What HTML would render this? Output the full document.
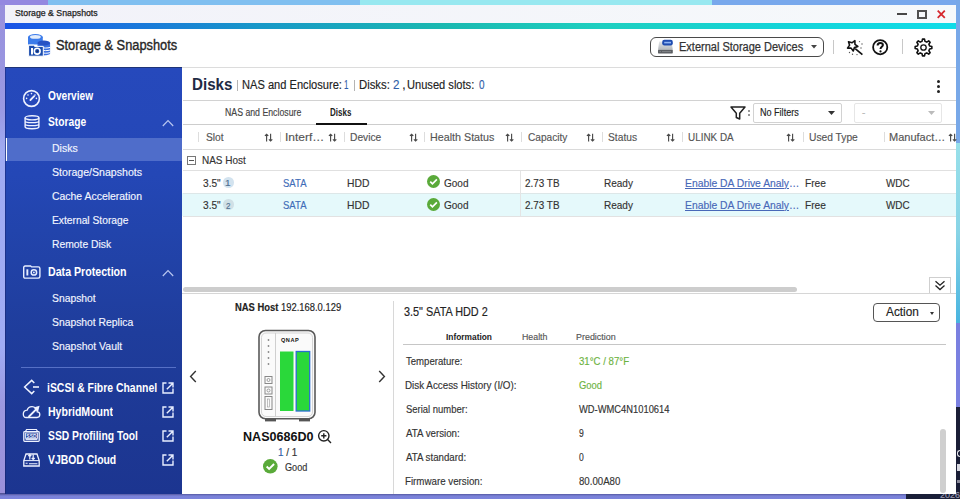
<!DOCTYPE html>
<html><head><meta charset="utf-8">
<style>
*{margin:0;padding:0;box-sizing:border-box}
html,body{width:960px;height:499px;overflow:hidden}
body{font-family:"Liberation Sans",sans-serif;position:relative;background:#8a82dc}
.b{position:absolute}
.t{position:absolute;white-space:nowrap;line-height:1;transform-origin:0 0;-webkit-text-stroke:0.15px currentColor}
svg{position:absolute;overflow:visible}
</style></head><body>
<!-- desktop -->
<div class="b" style="left:0;top:0;width:48px;height:5px;background:#9488e0"></div>
<div class="b" style="left:48px;top:0;width:312px;height:5px;background:#80bff0"></div>
<div class="b" style="left:360px;top:0;width:352px;height:5px;background:#98e8f0"></div>
<div class="b" style="left:712px;top:0;width:248px;height:5px;background:#78a8ec"></div>
<div class="b" style="left:956px;top:0;width:4px;height:143px;background:#78a8e8"></div>
<div class="b" style="left:956px;top:143px;width:4px;height:180px;background:linear-gradient(180deg,#98e0ea 0%,#88d4e6 50%,#48b4e0 100%)"></div>
<div class="b" style="left:956px;top:323px;width:4px;height:84px;background:#7a80e0"></div>
<div class="b" style="left:956px;top:407px;width:4px;height:92px;background:#1a1e36"></div>
<div class="b" style="left:0;top:493px;width:906px;height:6px;background:linear-gradient(180deg,#4c4c8c 0,#5f64b0 1.5px,#7a82d8 3px,#7c84dc 6px)"></div>
<div class="b" style="left:906px;top:493px;width:54px;height:6px;background:#1a1f38"></div>

<div class="b" style="left:957px;top:450px;width:3px;height:7px;border:1.2px solid #e8e8ee;border-right:none;border-radius:3px 0 0 3px"></div>
<div class="b" style="left:957px;top:464px;width:3px;height:7px;background:#d8d8e0"></div>
<div class="b" style="left:957px;top:480px;width:3px;height:3px;background:#8a8a9a"></div>
<div class="t" style="left:940px;top:491px;font-size:9px;color:#9a9ab0">2026</div>
<div class="b" style="left:0;top:5px;width:5px;height:488px;background:linear-gradient(180deg,#9890dc 0%,#9a9ae4 22%,#a0abf2 30%,#a0acf4 70%,#9c98e0 82%,#9a90da 100%)"></div>
<!-- window -->
<div class="b" style="left:5px;top:5px;width:951px;height:488.5px;background:#fff"></div>
<div class="b" style="left:5px;top:5px;width:951px;height:17.5px;background:linear-gradient(90deg,#f2f2f9,#f6f9fb)"></div>
<div class="b" style="left:5px;top:22.5px;width:951px;height:6px;background:linear-gradient(90deg,#1a52e6 0px,#1a6ee0 95px,#1898c8 255px,#1ab8b0 435px,#1ecfc0 595px,#14d4d8 775px,#10dce8 951px)"></div>
<!-- window controls -->
<div class="b" style="left:897px;top:13px;width:10px;height:2px;background:#474747"></div>
<div class="b" style="left:917px;top:10px;width:10px;height:8.5px;border:2px solid #505050"></div>
<svg style="left:937px;top:10px" width="8.5" height="8.5" viewBox="0 0 8.5 8.5"><path d="M0.7 0.7L7.8 7.8M7.8 0.7L0.7 7.8" stroke="#d6282e" stroke-width="1.8"/></svg>

<!-- header -->
<div class="b" style="left:5px;top:67px;width:951px;height:1px;background:#dcdcdc"></div>
<svg style="left:24px;top:31px" width="30" height="28" viewBox="0 0 30 28">
  <path d="M4 6V13.5H18.8V6Z" fill="#3c7cea"/>
  <ellipse cx="11.4" cy="6" rx="7.4" ry="2.9" fill="#3c7cea"/>
  <ellipse cx="11.4" cy="5.9" rx="5.4" ry="1.9" fill="#e4edfb"/>
  <path d="M13.5 12V22.6C13.5 25 26.1 25 26.1 22.6V12Z" fill="#3a6fe0"/>
  <ellipse cx="19.8" cy="12" rx="6.3" ry="2.6" fill="#2752c4"/>
  <path d="M17 16.4C20 17.3 23.5 17.2 26.1 16.4M17 19C20 19.9 23.5 19.8 26.1 19M17 21.6C20 22.5 23.5 22.4 26.1 21.6" fill="none" stroke="#fff" stroke-width="1"/>
  <path d="M4.6 14.2H9.5L10.8 15.4H19.3V25.2H4.6Z" fill="#1b4cac" stroke="#fff" stroke-width="1"/>
  <rect x="7" y="17" width="2" height="6.5" fill="#fff"/>
  <circle cx="13.2" cy="20.2" r="2.9" fill="none" stroke="#fff" stroke-width="1.6"/>
  <circle cx="13.2" cy="20.2" r="0.9" fill="#1b2a60"/>
</svg>
<div class="b" style="left:650px;top:36.5px;width:173.5px;height:20.5px;border:1.3px solid #4a4a4a;border-radius:6px"></div>
<svg style="left:657px;top:39px" width="17" height="15" viewBox="0 0 17 15">
  <defs><linearGradient id="dg" x1="0" y1="0" x2="0" y2="1"><stop offset="0" stop-color="#e4e6e9"/><stop offset="1" stop-color="#b4b8bd"/></linearGradient></defs>
  <path d="M2.2 2.5H14.6L15.8 10.8H1Z" fill="url(#dg)"/>
  <rect x="1" y="10.8" width="14.8" height="3.6" rx=".6" fill="#5c5f63"/>
  <path d="M2.5 12.6H4M5 12.6H14" stroke="#8a8d91" stroke-width=".8"/>
  <rect x="5.2" y="0.8" width="10.6" height="5.6" rx="2.2" fill="#1f4cb0"/>
  <path d="M7.2 3.6H14" stroke="#8fb4f4" stroke-width="1.6"/>
</svg>
<svg style="left:811px;top:45px" width="6" height="3.5" viewBox="0 0 6 3.5"><path d="M0 0H6L3 3.5Z" fill="#444"/></svg>
<div class="b" style="left:832.5px;top:40px;width:1px;height:14px;background:#c8c8c8"></div>
<div class="b" style="left:901.5px;top:39px;width:1px;height:15px;background:#c8c8c8"></div>
<svg style="left:846px;top:39px" width="18" height="17" viewBox="0 0 18 17">
  <path d="M8.90 1.70 L8.94 5.31 L11.83 7.46 L8.42 8.62 L7.26 12.03 L5.11 9.14 L1.50 9.10 L3.59 6.15 L2.51 2.71 L5.95 3.79Z" fill="none" stroke="#111" stroke-width="1.6" stroke-linejoin="round"/>
  <path d="M9.2 9.6L16.4 15.6" stroke="#111" stroke-width="1.7"/>
  <circle cx="13.5" cy="2.6" r=".7" fill="#555"/><circle cx="16" cy="5" r=".7" fill="#555"/>
  <circle cx="15" cy="9" r=".7" fill="#555"/><circle cx="3.5" cy="13.5" r=".7" fill="#555"/>
  <circle cx="6.5" cy="15.3" r=".7" fill="#555"/><circle cx="11" cy="15.6" r=".7" fill="#555"/>
</svg>
<svg style="left:872px;top:39px" width="17" height="17" viewBox="0 0 17 17">
  <circle cx="8.2" cy="8.2" r="7.1" fill="none" stroke="#111" stroke-width="1.8"/>
  <path d="M5.6 6.4C5.6 4.8 6.8 3.9 8.3 3.9C9.8 3.9 10.9 4.8 10.9 6.1C10.9 7.8 8.5 7.9 8.5 10" fill="none" stroke="#111" stroke-width="2"/>
  <circle cx="8.5" cy="12.4" r="1.1" fill="#111"/>
</svg>
<svg style="left:913.3px;top:36.8px" width="21" height="21" viewBox="-10.5 -10.5 21 21">
  <path d="M-1.50 -6.12 L-1.01 -8.34 L1.01 -8.34 L1.50 -6.12 L3.27 -5.39 L5.19 -6.61 L6.61 -5.19 L5.39 -3.27 L6.12 -1.50 L8.34 -1.01 L8.34 1.01 L6.12 1.50 L5.39 3.27 L6.61 5.19 L5.19 6.61 L3.27 5.39 L1.50 6.12 L1.01 8.34 L-1.01 8.34 L-1.50 6.12 L-3.27 5.39 L-5.19 6.61 L-6.61 5.19 L-5.39 3.27 L-6.12 1.50 L-8.34 1.01 L-8.34 -1.01 L-6.12 -1.50 L-5.39 -3.27 L-6.61 -5.19 L-5.19 -6.61 L-3.27 -5.39Z" fill="none" stroke="#111" stroke-width="1.6" stroke-linejoin="round"/>
  <circle cx="0" cy="0" r="2.7" fill="none" stroke="#111" stroke-width="1.3"/>
</svg>

<!-- sidebar -->
<div class="b" style="left:5px;top:67px;width:177px;height:426.5px;background:linear-gradient(180deg,#2649bc 0%,#2447b6 25%,#2244ac 38%,#1f3d9c 62%,#1d3894 85%,#1c3590 100%);border-top:1px solid #1e3478"></div>
<div class="b" style="left:5px;top:137.5px;width:177px;height:23px;background:#4f6dca"></div>
<div class="b" style="left:5px;top:68px;width:1px;height:425.5px;background:rgba(20,20,80,.35)"></div>
<div class="b" style="left:5.5px;top:137.5px;width:1.6px;height:23px;background:#fff"></div>
<div class="b" style="left:21px;top:366.5px;width:155px;height:1px;background:#5670c6"></div>
<!-- sidebar icons -->
<svg style="left:22px;top:88.5px" width="19" height="19" viewBox="0 0 19 19">
  <circle cx="9.5" cy="9.5" r="7.9" fill="none" stroke="#eef2ff" stroke-width="1.6"/>
  <path d="M8.4 11L12.2 7.2" stroke="#eef2ff" stroke-width="1.8" stroke-linecap="round"/>
  <circle cx="9.5" cy="4.6" r=".8" fill="#eef2ff"/><circle cx="6" cy="6" r=".8" fill="#eef2ff"/>
  <circle cx="13" cy="6" r=".8" fill="#eef2ff"/><circle cx="4.6" cy="9.4" r=".8" fill="#eef2ff"/><circle cx="14.4" cy="9.4" r=".8" fill="#eef2ff"/>
</svg>
<svg style="left:23.5px;top:114.5px" width="16" height="15" viewBox="0 0 16 15">
  <ellipse cx="8" cy="2.8" rx="6.9" ry="2.1" fill="none" stroke="#eef2ff" stroke-width="1.4"/>
  <path d="M1.1 2.8V11.8C1.1 14.3 14.9 14.3 14.9 11.8V2.8M1.1 5.9C1.1 8.2 14.9 8.2 14.9 5.9M1.1 8.9C1.1 11.2 14.9 11.2 14.9 8.9" fill="none" stroke="#eef2ff" stroke-width="1.4"/>
</svg>
<svg style="left:162px;top:118.5px" width="12" height="8" viewBox="0 0 12 8"><path d="M0.8 7L6 1.5L11.2 7" fill="none" stroke="#b8c6f0" stroke-width="1.2"/></svg>
<svg style="left:22.5px;top:265px" width="18" height="14" viewBox="0 0 18 14">
  <path d="M2.2 1H7.6L8.6 1.9H15.3C16.4 1.9 16.9 2.5 16.9 3.5V11.6C16.9 12.6 16.4 13.1 15.3 13.1H2.2C1.2 13.1 0.7 12.6 0.7 11.6V2.5C0.7 1.5 1.2 1 2.2 1Z" fill="none" stroke="#e8eeff" stroke-width="1.4"/>
  <rect x="3.4" y="4.3" width="1.9" height="6.2" fill="#e8eeff"/>
  <circle cx="10.9" cy="7.4" r="2.7" fill="none" stroke="#e8eeff" stroke-width="1.5"/>
  <circle cx="10.9" cy="7.4" r="0.9" fill="#e8eeff"/>
</svg>
<svg style="left:162px;top:268.5px" width="12" height="8" viewBox="0 0 12 8"><path d="M0.8 7L6 1.5L11.2 7" fill="none" stroke="#b8c6f0" stroke-width="1.2"/></svg>
<!-- iSCSI icon -->
<svg style="left:23px;top:379px" width="17" height="16" viewBox="0 0 17 16">
  <path d="M11.3 4L8.7 1.4L1.6 8L8.7 14.6L11.3 12" fill="none" stroke="#eef2ff" stroke-width="1.5"/>
  <path d="M10 8H16" stroke="#eef2ff" stroke-width="1.6"/>
</svg>
<!-- HybridMount icon -->
<svg style="left:22px;top:404px" width="19" height="15" viewBox="0 0 19 15">
  <path d="M4.2 13.5H15C16.8 13.5 17.8 12.2 17.8 10.6C17.8 9 16.6 7.8 15.2 7.8C15 5 13 2.6 10 2.6C7.6 2.6 5.8 4 5.2 6.2C3 6.4 1.3 8 1.3 10C1.3 12 2.6 13.5 4.2 13.5Z" fill="none" stroke="#eef2ff" stroke-width="1.3"/>
  <path d="M6.5 13L15.5 4" stroke="#eef2ff" stroke-width="1.8"/>
  <path d="M17.6 1.8L11.4 3.4L16 8Z" fill="#eef2ff"/>
</svg>
<!-- SSD icon -->
<svg style="left:23px;top:428px" width="17" height="15" viewBox="0 0 17 15">
  <path d="M2.4 3.6L3.6 1.5H13.4L14.6 3.6" fill="none" stroke="#eef2ff" stroke-width="1.2"/>
  <rect x="0.8" y="3.6" width="15.4" height="9.8" rx="0.8" fill="none" stroke="#eef2ff" stroke-width="1.3"/>
  <rect x="2.6" y="5" width="11.8" height="5.4" fill="none" stroke="#eef2ff" stroke-width="0.9"/>
  <text x="8.5" y="9.6" font-size="5" font-family="Liberation Sans" font-weight="bold" fill="#eef2ff" text-anchor="middle">SSD</text>
  <path d="M2.6 11.6H14.4" stroke="#eef2ff" stroke-width="1"/>
</svg>
<!-- VJBOD icon -->
<svg style="left:23px;top:452px" width="17" height="15" viewBox="0 0 17 15">
  <path d="M0.8 8.6L3 2H14L16.2 8.6V14H0.8Z" fill="none" stroke="#eef2ff" stroke-width="1.3"/>
  <path d="M0.8 8.6H16.2" stroke="#eef2ff" stroke-width="1"/>
  <path d="M6.8 7.5V2.5M5.3 4L6.8 2.5L8.3 4M10.2 2.5V7.5M8.7 6L10.2 7.5L11.7 6" fill="none" stroke="#eef2ff" stroke-width="1.2"/>
  <path d="M2.6 11.3H4.6M6 11.8H14.4" stroke="#eef2ff" stroke-width="1.1"/>
</svg>
<!-- external link icons -->
<svg style="left:161.7px;top:381.8px" width="12" height="12" viewBox="0 0 12 12"><path d="M4.5 1H1V11H11V6.5M6.5 1H11V5.5M10.6 1.4L4.8 7.2" fill="none" stroke="#e8eeff" stroke-width="1.4"/></svg>
<svg style="left:161.7px;top:406px" width="12" height="12" viewBox="0 0 12 12"><path d="M4.5 1H1V11H11V6.5M6.5 1H11V5.5M10.6 1.4L4.8 7.2" fill="none" stroke="#e8eeff" stroke-width="1.4"/></svg>
<svg style="left:161.7px;top:430.2px" width="12" height="12" viewBox="0 0 12 12"><path d="M4.5 1H1V11H11V6.5M6.5 1H11V5.5M10.6 1.4L4.8 7.2" fill="none" stroke="#e8eeff" stroke-width="1.4"/></svg>
<svg style="left:161.7px;top:454.3px" width="12" height="12" viewBox="0 0 12 12"><path d="M4.5 1H1V11H11V6.5M6.5 1H11V5.5M10.6 1.4L4.8 7.2" fill="none" stroke="#e8eeff" stroke-width="1.4"/></svg>

<!-- main header area -->
<div class="b" style="left:236.5px;top:80px;width:1px;height:11px;background:#b4b4b4"></div>
<div class="b" style="left:354px;top:80px;width:1px;height:11px;background:#b4b4b4"></div>
<div class="b" style="left:936.5px;top:80px;width:3px;height:3px;border-radius:50%;background:#222"></div>
<div class="b" style="left:936.5px;top:85px;width:3px;height:3px;border-radius:50%;background:#222"></div>
<div class="b" style="left:936.5px;top:90px;width:3px;height:3px;border-radius:50%;background:#222"></div>
<div class="b" style="left:183px;top:99.5px;width:773px;height:1px;background:#d2d2d2"></div>
<div class="b" style="left:183px;top:123.5px;width:773px;height:1px;background:#cdcdcd"></div>
<div class="b" style="left:316px;top:122.5px;width:50.5px;height:2px;background:#111"></div>
<!-- filter -->
<svg style="left:729.5px;top:105.5px" width="16" height="14" viewBox="0 0 16 14"><path d="M1 1H15L9.7 7.2V13L6.3 11.5V7.2Z" fill="none" stroke="#222" stroke-width="1.5" stroke-linejoin="round"/></svg>
<div class="b" style="left:748px;top:110px;width:1.5px;height:1.5px;background:#999"></div>
<div class="b" style="left:748px;top:114px;width:1.5px;height:1.5px;background:#999"></div>
<div class="b" style="left:752.5px;top:102.5px;width:89px;height:20px;border:1px solid #d2d2d2;border-radius:2px"></div>
<svg style="left:828px;top:111.3px" width="7" height="4" viewBox="0 0 7 4"><path d="M0 0H7L3.5 4Z" fill="#333"/></svg>
<div class="b" style="left:853.5px;top:102.5px;width:88px;height:20px;border:1px solid #e6e6e6;border-radius:2px"></div>
<svg style="left:928px;top:111.3px" width="7" height="4" viewBox="0 0 7 4"><path d="M0 0H7L3.5 4Z" fill="#bbb"/></svg>

<!-- table -->
<div class="b" style="left:183px;top:149px;width:773px;height:1px;background:#dadada"></div>
<div class="b" style="left:183px;top:170px;width:773px;height:1px;background:#e0e0e0"></div>
<div class="b" style="left:182px;top:193px;width:774px;height:22.5px;background:#e5f9fb"></div>
<div class="b" style="left:183px;top:192.5px;width:773px;height:1px;background:#dde7e8"></div>
<div class="b" style="left:183px;top:215.5px;width:773px;height:1px;background:#e2e2e2"></div>
<div class="b" style="left:520px;top:171px;width:1px;height:44.5px;background:#e4e4e4"></div>
<!-- header separators -->
<div class="b" style="left:198px;top:132px;width:1px;height:10px;background:#ddd"></div>
<div class="b" style="left:279.5px;top:132px;width:1px;height:10px;background:#ddd"></div>
<div class="b" style="left:343.5px;top:132px;width:1px;height:10px;background:#ddd"></div>
<div class="b" style="left:424px;top:132px;width:1px;height:10px;background:#ddd"></div>
<div class="b" style="left:520.5px;top:132px;width:1px;height:10px;background:#ddd"></div>
<div class="b" style="left:601.5px;top:132px;width:1px;height:10px;background:#ddd"></div>
<div class="b" style="left:682px;top:132px;width:1px;height:10px;background:#ddd"></div>
<div class="b" style="left:802.5px;top:132px;width:1px;height:10px;background:#ddd"></div>
<div class="b" style="left:883.5px;top:132px;width:1px;height:10px;background:#ddd"></div>
<svg style="left:263.7px;top:133px" width="10" height="9" viewBox="0 0 10 9"><path d="M2.6 8.4V1.2M0.9 2.9L2.6 1.2L4.3 2.9M6.6 0.8V8M4.9 6.3L6.6 8L8.3 6.3" fill="none" stroke="#4a4a4a" stroke-width="1.15"/></svg>
<svg style="left:328.0px;top:133px" width="10" height="9" viewBox="0 0 10 9"><path d="M2.6 8.4V1.2M0.9 2.9L2.6 1.2L4.3 2.9M6.6 0.8V8M4.9 6.3L6.6 8L8.3 6.3" fill="none" stroke="#4a4a4a" stroke-width="1.15"/></svg>
<svg style="left:408.5px;top:133px" width="10" height="9" viewBox="0 0 10 9"><path d="M2.6 8.4V1.2M0.9 2.9L2.6 1.2L4.3 2.9M6.6 0.8V8M4.9 6.3L6.6 8L8.3 6.3" fill="none" stroke="#4a4a4a" stroke-width="1.15"/></svg>
<svg style="left:505.0px;top:133px" width="10" height="9" viewBox="0 0 10 9"><path d="M2.6 8.4V1.2M0.9 2.9L2.6 1.2L4.3 2.9M6.6 0.8V8M4.9 6.3L6.6 8L8.3 6.3" fill="none" stroke="#4a4a4a" stroke-width="1.15"/></svg>
<svg style="left:586.0px;top:133px" width="10" height="9" viewBox="0 0 10 9"><path d="M2.6 8.4V1.2M0.9 2.9L2.6 1.2L4.3 2.9M6.6 0.8V8M4.9 6.3L6.6 8L8.3 6.3" fill="none" stroke="#4a4a4a" stroke-width="1.15"/></svg>
<svg style="left:666.3px;top:133px" width="10" height="9" viewBox="0 0 10 9"><path d="M2.6 8.4V1.2M0.9 2.9L2.6 1.2L4.3 2.9M6.6 0.8V8M4.9 6.3L6.6 8L8.3 6.3" fill="none" stroke="#4a4a4a" stroke-width="1.15"/></svg>
<svg style="left:786.4px;top:133px" width="10" height="9" viewBox="0 0 10 9"><path d="M2.6 8.4V1.2M0.9 2.9L2.6 1.2L4.3 2.9M6.6 0.8V8M4.9 6.3L6.6 8L8.3 6.3" fill="none" stroke="#4a4a4a" stroke-width="1.15"/></svg>
<svg style="left:947.7px;top:133px" width="10" height="9" viewBox="0 0 10 9"><path d="M2.6 8.4V1.2M0.9 2.9L2.6 1.2L4.3 2.9M6.6 0.8V8M4.9 6.3L6.6 8L8.3 6.3" fill="none" stroke="#4a4a4a" stroke-width="1.15"/></svg>
<!-- expand box -->
<div class="b" style="left:187px;top:156px;width:9px;height:9px;border:1px solid #777"></div>
<div class="b" style="left:189px;top:160px;width:5px;height:1px;background:#555"></div>
<!-- badges -->
<div class="b" style="left:223px;top:177px;width:10.5px;height:10.5px;border-radius:50%;background:#d3e3ef"></div>
<div class="b" style="left:223px;top:199px;width:10.5px;height:10.5px;border-radius:50%;background:#d0e0e6"></div>
<svg style="left:427.40px;top:175.40px" width="13.0" height="13.0" viewBox="-10 -10 20 20"><circle r="10" fill="#5aaa3a"/><path d="M-5 0.3L-1.6 3.7L5.2 -3.2" fill="none" stroke="#fff" stroke-width="2.6"/></svg>
<svg style="left:427.40px;top:197.50px" width="13.0" height="13.0" viewBox="-10 -10 20 20"><circle r="10" fill="#5aaa3a"/><path d="M-5 0.3L-1.6 3.7L5.2 -3.2" fill="none" stroke="#fff" stroke-width="2.6"/></svg>
<svg style="left:263.30px;top:458.50px" width="14.6" height="14.6" viewBox="-10 -10 20 20"><circle r="10" fill="#5aaa3a"/><path d="M-5 0.3L-1.6 3.7L5.2 -3.2" fill="none" stroke="#fff" stroke-width="2.6"/></svg>

<!-- collapse button & scrollbar -->
<div class="b" style="left:929px;top:276.5px;width:22px;height:17px;border:1px solid #cfcfcf;border-bottom:none;background:#fff"></div>
<svg style="left:934px;top:279.5px" width="12" height="11" viewBox="0 0 12 11"><path d="M1.5 1.2L6 5.2L10.5 1.2M1.5 5.6L6 9.6L10.5 5.6" fill="none" stroke="#222" stroke-width="1.3"/></svg>
<div class="b" style="left:183px;top:286.5px;width:614px;height:5.5px;border-radius:3px;background:#cdcdcd"></div>
<div class="b" style="left:182px;top:293px;width:774px;height:1px;background:#d6d6d6"></div>

<!-- bottom left panel -->
<div class="b" style="left:393px;top:300.5px;width:1px;height:193px;background:#d8d8d8"></div>
<svg style="left:188.5px;top:369.5px" width="8" height="13" viewBox="0 0 8 13"><path d="M6.8 1L1.6 6.5L6.8 12" fill="none" stroke="#333" stroke-width="1.4"/></svg>
<svg style="left:378px;top:369.5px" width="8" height="13" viewBox="0 0 8 13"><path d="M1.2 1L6.4 6.5L1.2 12" fill="none" stroke="#333" stroke-width="1.4"/></svg>
<!-- NAS device -->
<svg style="left:257px;top:328.5px" width="60" height="94" viewBox="0 0 60 94">
  <rect x="2" y="1.5" width="56" height="88.3" rx="6.5" fill="#fafafa" stroke="#5a5a5a" stroke-width="1.6"/>
  <rect x="4.5" y="4" width="51" height="83.5" rx="4.5" fill="none" stroke="#d4d4d4" stroke-width="1"/>
  <path d="M18.5 4V87.5" stroke="#cfcfcf" stroke-width="1"/>
  <rect x="8" y="89.6" width="11" height="2.8" fill="#555"/>
  <rect x="42" y="89.6" width="11" height="2.8" fill="#555"/>
  <text x="24" y="12.6" font-size="5.6" font-family="Liberation Sans" font-weight="bold" fill="#111" letter-spacing="0.5">QNAP</text>
  <rect x="23" y="22.5" width="13.5" height="59.5" fill="#2ad83a"/>
  <rect x="39.2" y="22.5" width="13.5" height="59.5" fill="#2ad83a" stroke="#2a6ed0" stroke-width="1.3"/>
  <circle cx="11.5" cy="11" r=".9" fill="#888"/><circle cx="11.5" cy="17" r=".9" fill="#888"/><circle cx="11.5" cy="23" r=".9" fill="#888"/><circle cx="11.5" cy="29" r=".9" fill="#888"/><circle cx="11.5" cy="35" r=".9" fill="#888"/>
  <rect x="8" y="47.5" width="7" height="7" fill="none" stroke="#888" stroke-width="1"/>
  <circle cx="11.5" cy="51" r="1.5" fill="none" stroke="#888" stroke-width=".8"/>
  <rect x="8" y="58" width="7" height="7" fill="none" stroke="#888" stroke-width="1"/>
  <circle cx="11.5" cy="61.5" r="1.5" fill="none" stroke="#888" stroke-width=".8"/>
  <rect x="8" y="67.5" width="7" height="13" fill="none" stroke="#888" stroke-width="1"/>
  <rect x="10.5" y="70" width="2" height="8" fill="none" stroke="#999" stroke-width=".6"/>
</svg>
<!-- zoom icon -->
<svg style="left:317px;top:428.5px" width="15" height="15" viewBox="0 0 15 15">
  <circle cx="6.8" cy="6.8" r="5.2" fill="none" stroke="#222" stroke-width="1.4"/>
  <path d="M4.2 6.8H9.4M6.8 4.2V9.4M10.6 10.6L14 14" stroke="#222" stroke-width="1.4"/>
</svg>

<!-- detail panel -->
<div class="b" style="left:873px;top:302.5px;width:66.5px;height:19.5px;border:1.3px solid #555;border-top-width:1.8px;border-radius:4px"></div>
<svg style="left:929.5px;top:311.5px" width="4" height="3" viewBox="0 0 4 3"><path d="M0 0H4L2 3Z" fill="#333"/></svg>
<div class="b" style="left:403px;top:344px;width:543px;height:1.2px;background:#c6c6c6"></div>
<div class="b" style="left:939.5px;top:429px;width:6px;height:63.5px;border-radius:3px;background:#cfcfcf"></div>

<div class="t" style="left:15.40px;top:8.95px;font-size:9px;color:#222;transform:scaleX(0.972);-webkit-text-stroke:0.25px currentColor;">Storage &amp; Snapshots</div>
<div class="t" style="left:55.68px;top:38.40px;font-size:14px;color:#262626;transform:scaleX(0.916);-webkit-text-stroke:0.35px currentColor;">Storage &amp; Snapshots</div>
<div class="t" style="left:678.78px;top:40.50px;font-size:12px;color:#333;transform:scaleX(0.917);-webkit-text-stroke:0.25px currentColor;">External Storage Devices</div>
<div class="t" style="left:47.60px;top:89.70px;font-size:12px;font-weight:bold;-webkit-text-stroke:0;color:#ffffff;transform:scaleX(0.844);">Overview</div>
<div class="t" style="left:47.60px;top:116.10px;font-size:12px;font-weight:bold;-webkit-text-stroke:0;color:#ffffff;transform:scaleX(0.853);">Storage</div>
<div class="t" style="left:47.80px;top:265.70px;font-size:12px;font-weight:bold;-webkit-text-stroke:0;color:#ffffff;transform:scaleX(0.886);">Data Protection</div>
<div class="t" style="left:46.73px;top:381.90px;font-size:12px;font-weight:bold;-webkit-text-stroke:0;color:#ffffff;transform:scaleX(0.869);">iSCSI &amp; Fibre Channel</div>
<div class="t" style="left:47.60px;top:406.00px;font-size:12px;font-weight:bold;-webkit-text-stroke:0;color:#ffffff;transform:scaleX(0.878);">HybridMount</div>
<div class="t" style="left:47.60px;top:430.20px;font-size:12px;font-weight:bold;-webkit-text-stroke:0;color:#ffffff;transform:scaleX(0.861);">SSD Profiling Tool</div>
<div class="t" style="left:47.60px;top:454.20px;font-size:12px;font-weight:bold;-webkit-text-stroke:0;color:#ffffff;transform:scaleX(0.867);">VJBOD Cloud</div>
<div class="t" style="left:52.25px;top:142.95px;font-size:11px;color:#f2f5ff;transform:scaleX(0.954);">Disks</div>
<div class="t" style="left:52.20px;top:167.05px;font-size:11px;color:#f2f5ff;transform:scaleX(0.962);">Storage/Snapshots</div>
<div class="t" style="left:52.20px;top:191.05px;font-size:11px;color:#f2f5ff;transform:scaleX(0.949);">Cache Acceleration</div>
<div class="t" style="left:52.07px;top:215.05px;font-size:11px;color:#f2f5ff;transform:scaleX(0.933);">External Storage</div>
<div class="t" style="left:52.06px;top:239.15px;font-size:11px;color:#f2f5ff;transform:scaleX(0.940);">Remote Disk</div>
<div class="t" style="left:52.20px;top:292.75px;font-size:11px;color:#f2f5ff;transform:scaleX(0.940);">Snapshot</div>
<div class="t" style="left:52.20px;top:316.85px;font-size:11px;color:#f2f5ff;transform:scaleX(0.941);">Snapshot Replica</div>
<div class="t" style="left:52.20px;top:340.95px;font-size:11px;color:#f2f5ff;transform:scaleX(0.951);">Snapshot Vault</div>
<div class="t" style="left:192.05px;top:77.40px;font-size:16px;font-weight:bold;-webkit-text-stroke:0;color:#1f2a44;transform:scaleX(0.946);">Disks</div>
<div class="t" style="left:241.58px;top:79.20px;font-size:12px;color:#222;transform:scaleX(0.925);">NAS and Enclosure:</div>
<div class="t" style="left:343.93px;top:79.20px;font-size:12px;color:#2f5ea8;transform:scaleX(0.667);">1</div>
<div class="t" style="left:359.16px;top:79.20px;font-size:12px;color:#222;transform:scaleX(0.942);">Disks:</div>
<div class="t" style="left:393.40px;top:79.20px;font-size:12px;color:#2f5ea8;transform:scaleX(0.967);">2</div>
<div class="t" style="left:402.30px;top:79.20px;font-size:12px;color:#222;">,</div>
<div class="t" style="left:407.37px;top:79.20px;font-size:12px;color:#222;transform:scaleX(0.925);">Unused slots:</div>
<div class="t" style="left:478.80px;top:79.20px;font-size:12px;color:#2f5ea8;transform:scaleX(0.829);">0</div>
<div class="t" style="left:224.53px;top:107.90px;font-size:10px;color:#444;transform:scaleX(0.874);">NAS and Enclosure</div>
<div class="t" style="left:329.70px;top:107.90px;font-size:10px;font-weight:bold;-webkit-text-stroke:0;color:#222;transform:scaleX(0.800);">Disks</div>
<div class="t" style="left:760.10px;top:107.50px;font-size:10px;color:#222;transform:scaleX(0.905);">No Filters</div>
<div class="t" style="left:862.00px;top:107.50px;font-size:10px;color:#bbb;">-</div>
<div class="t" style="left:205.60px;top:131.75px;font-size:11px;color:#555;transform:scaleX(0.932);">Slot</div>
<div class="t" style="left:284.71px;top:131.75px;font-size:11px;color:#555;transform:scaleX(1.088);">Interf…</div>
<div class="t" style="left:349.77px;top:131.75px;font-size:11px;color:#555;transform:scaleX(0.930);">Device</div>
<div class="t" style="left:429.62px;top:131.75px;font-size:11px;color:#555;transform:scaleX(0.975);">Health Status</div>
<div class="t" style="left:527.70px;top:131.75px;font-size:11px;color:#555;transform:scaleX(0.921);">Capacity</div>
<div class="t" style="left:608.20px;top:131.75px;font-size:11px;color:#555;transform:scaleX(0.932);">Status</div>
<div class="t" style="left:687.50px;top:131.75px;font-size:11px;color:#555;transform:scaleX(0.900);">ULINK DA</div>
<div class="t" style="left:808.87px;top:131.75px;font-size:11px;color:#555;transform:scaleX(0.931);">Used Type</div>
<div class="t" style="left:889.00px;top:131.75px;font-size:11px;color:#555;">Manufact…</div>
<div class="t" style="left:201.59px;top:154.65px;font-size:11px;color:#333;transform:scaleX(0.906);">NAS Host</div>
<div class="t" style="left:202.50px;top:177.75px;font-size:11px;color:#333;transform:scaleX(0.921);">3.5"</div>
<div class="t" style="left:225.25px;top:178.43px;font-size:9.5px;color:#4e6f90;transform:scaleX(1.050);">1</div>
<div class="t" style="left:283.00px;top:177.75px;font-size:11px;color:#3f6cb8;transform:scaleX(0.867);">SATA</div>
<div class="t" style="left:346.66px;top:177.75px;font-size:11px;color:#333;transform:scaleX(0.939);">HDD</div>
<div class="t" style="left:444.40px;top:177.75px;font-size:11px;color:#333;transform:scaleX(0.911);">Good</div>
<div class="t" style="left:524.80px;top:177.75px;font-size:11px;color:#333;transform:scaleX(0.900);">2.73 TB</div>
<div class="t" style="left:604.09px;top:177.75px;font-size:11px;color:#333;transform:scaleX(0.910);">Ready</div>
<div class="t" style="left:685.30px;top:177.75px;font-size:11px;color:#4868b8;transform:scaleX(0.940);"><u>Enable DA Drive Analy</u>…</div>
<div class="t" style="left:805.37px;top:177.75px;font-size:11px;color:#333;transform:scaleX(0.927);">Free</div>
<div class="t" style="left:886.40px;top:177.75px;font-size:11px;color:#333;transform:scaleX(0.900);">WDC</div>
<div class="t" style="left:202.50px;top:199.85px;font-size:11px;color:#333;transform:scaleX(0.921);">3.5"</div>
<div class="t" style="left:226.30px;top:200.53px;font-size:9.5px;color:#4e6f90;transform:scaleX(0.840);">2</div>
<div class="t" style="left:283.00px;top:199.85px;font-size:11px;color:#3f6cb8;transform:scaleX(0.867);">SATA</div>
<div class="t" style="left:346.66px;top:199.85px;font-size:11px;color:#333;transform:scaleX(0.939);">HDD</div>
<div class="t" style="left:444.40px;top:199.85px;font-size:11px;color:#333;transform:scaleX(0.911);">Good</div>
<div class="t" style="left:524.80px;top:199.85px;font-size:11px;color:#333;transform:scaleX(0.900);">2.73 TB</div>
<div class="t" style="left:604.09px;top:199.85px;font-size:11px;color:#333;transform:scaleX(0.910);">Ready</div>
<div class="t" style="left:685.30px;top:199.85px;font-size:11px;color:#4868b8;transform:scaleX(0.940);"><u>Enable DA Drive Analy</u>…</div>
<div class="t" style="left:805.37px;top:199.85px;font-size:11px;color:#333;transform:scaleX(0.927);">Free</div>
<div class="t" style="left:886.40px;top:199.85px;font-size:11px;color:#333;transform:scaleX(0.900);">WDC</div>
<div class="t" style="left:234.70px;top:302.07px;font-size:10.5px;color:#222;transform:scaleX(0.896);"><b>NAS Host</b> 192.168.0.129</div>
<div class="t" style="left:242.53px;top:429.55px;font-size:13px;font-weight:bold;-webkit-text-stroke:0;color:#111;transform:scaleX(0.967);">NAS0686D0</div>
<div class="t" style="left:277.51px;top:448.10px;font-size:10px;color:#333;transform:scaleX(0.986);"><span style="color:#2f5ea8">1</span> / 1</div>
<div class="t" style="left:285.00px;top:462.90px;font-size:10px;color:#333;transform:scaleX(0.912);">Good</div>
<div class="t" style="left:403.75px;top:305.80px;font-size:12px;color:#222;transform:scaleX(0.905);">3.5" SATA HDD 2</div>
<div class="t" style="left:886.00px;top:306.30px;font-size:12px;color:#222;transform:scaleX(0.985);">Action</div>
<div class="t" style="left:446.25px;top:331.68px;font-size:9.5px;font-weight:bold;-webkit-text-stroke:0;color:#222;transform:scaleX(0.880);">Information</div>
<div class="t" style="left:522.00px;top:331.68px;font-size:9.5px;color:#555;transform:scaleX(0.926);">Health</div>
<div class="t" style="left:576.25px;top:331.68px;font-size:9.5px;color:#555;transform:scaleX(0.940);">Prediction</div>
<div class="t" style="left:406.40px;top:356.27px;font-size:10.5px;color:#333;transform:scaleX(0.913);">Temperature:</div>
<div class="t" style="left:578.80px;top:356.27px;font-size:10.5px;color:#6db33f;transform:scaleX(0.919);">31°C / 87°F</div>
<div class="t" style="left:405.46px;top:380.47px;font-size:10.5px;color:#333;transform:scaleX(0.937);">Disk Access History (I/O):</div>
<div class="t" style="left:578.80px;top:380.47px;font-size:10.5px;color:#6db33f;transform:scaleX(0.896);">Good</div>
<div class="t" style="left:406.40px;top:403.77px;font-size:10.5px;color:#333;transform:scaleX(0.901);">Serial number:</div>
<div class="t" style="left:578.80px;top:403.77px;font-size:10.5px;color:#333;transform:scaleX(0.891);">WD-WMC4N1010614</div>
<div class="t" style="left:406.40px;top:427.68px;font-size:10.5px;color:#333;transform:scaleX(0.926);">ATA version:</div>
<div class="t" style="left:578.80px;top:427.68px;font-size:10.5px;color:#333;transform:scaleX(0.817);">9</div>
<div class="t" style="left:406.40px;top:451.88px;font-size:10.5px;color:#333;transform:scaleX(0.925);">ATA standard:</div>
<div class="t" style="left:578.80px;top:451.88px;font-size:10.5px;color:#333;transform:scaleX(0.817);">0</div>
<div class="t" style="left:405.47px;top:475.77px;font-size:10.5px;color:#333;transform:scaleX(0.928);">Firmware version:</div>
<div class="t" style="left:578.80px;top:475.77px;font-size:10.5px;color:#333;transform:scaleX(0.920);">80.00A80</div>
</body></html>
